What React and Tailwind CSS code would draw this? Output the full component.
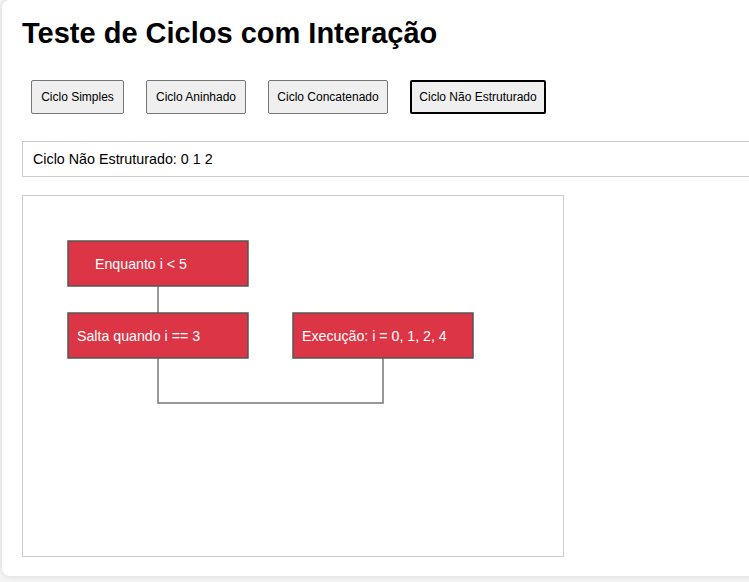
import React from "react";

const font = { fontFamily: '"Liberation Sans", Arial, sans-serif' };

export default function App() {
  const buttons = [
    { label: "Ciclo Simples", w: "w-[93px]", active: false },
    { label: "Ciclo Aninhado", w: "w-[100px]", active: false },
    { label: "Ciclo Concatenado", w: "w-[120px]", active: false },
    { label: "Ciclo Não Estruturado", w: "w-[136px]", active: true },
  ];
  return (
    <div
      className="w-[749px] h-[582px] overflow-hidden bg-[#f4f4f4] font-['Liberation_Sans',Arial,sans-serif]"
    >
      <div className="ml-[2px] w-[800px] h-[576px] bg-white rounded-[8px] shadow-[0_0_6px_rgba(0,0,0,0.12)] pt-[17px] px-5 pb-5">
        <h1 className="text-[29px] leading-[32px] font-bold text-black">
          Teste de Ciclos com Interação
        </h1>
        <div className="flex gap-[22px] ml-[9px] mt-[31px]">
          {buttons.map((b) => (
            <button
              key={b.label}
              className={`${b.w} h-[34px] text-[12px] leading-[14px] text-black bg-[#efefef] rounded-[2px] flex items-center justify-center whitespace-nowrap ${
                b.active ? "border-2 border-black" : "border border-[#767676]"
              }`}
            >
              {b.label}
            </button>
          ))}
        </div>
        <div className="mt-[27px] border border-[#cccccc] px-[10px] py-[9px] text-[14.3px] leading-[16px] text-black w-[760px]">
          Ciclo Não Estruturado: 0 1 2
        </div>
        <div className="mt-[18px] w-[542px] h-[362px] border border-[#cccccc]">
          <svg width="540" height="360" viewBox="0 0 540 360" style={font}>
            <line x1="135" y1="90" x2="135" y2="117" stroke="#777" strokeWidth="1.5" />
            <polyline
              points="135,162 135,207 360,207 360,162"
              fill="none"
              stroke="#777"
              strokeWidth="1.5"
            />
            <rect x="45" y="45" width="180" height="45" fill="#dc3545" stroke="#555" strokeWidth="1.5" />
            <rect x="45" y="117" width="180" height="45" fill="#dc3545" stroke="#555" strokeWidth="1.5" />
            <rect x="270" y="117" width="180" height="45" fill="#dc3545" stroke="#555" strokeWidth="1.5" />
            <text x="72" y="72.5" fill="#fff" fontSize="14.2">Enquanto i &lt; 5</text>
            <text x="54" y="144.5" fill="#fff" fontSize="14.2">Salta quando i == 3</text>
            <text x="279" y="144.5" fill="#fff" fontSize="14.2">Execução: i = 0, 1, 2, 4</text>
          </svg>
        </div>
      </div>
    </div>
  );
}
